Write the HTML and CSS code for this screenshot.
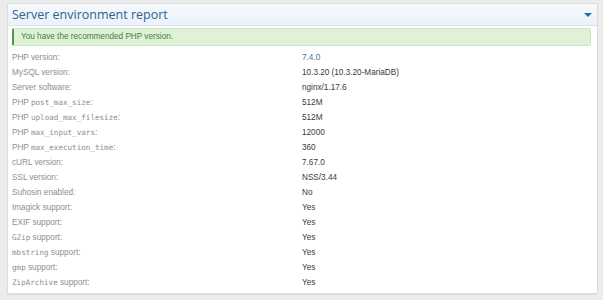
FILE: index.html
```html
<!DOCTYPE html>
<html lang="en">
<head>
    <meta charset="UTF-8">
    <title>Server environment report</title>
    <link rel="stylesheet" href="styles.css">
</head>
<body>
<div class="block">
    <div class="block-header">
        <h2>Server environment report</h2>
        <span class="toggle"></span>
    </div>
    <div class="block-body">
        <div class="notice">You have the recommended PHP version.</div>
        <dl class="report">
            <div class="row"><dt>PHP version:</dt><dd class="link">7.4.0</dd></div>
            <div class="row"><dt>MySQL version:</dt><dd>10.3.20 (10.3.20-MariaDB)</dd></div>
            <div class="row"><dt>Server software:</dt><dd>nginx/1.17.6</dd></div>
            <div class="row"><dt>PHP <code>post_max_size</code>:</dt><dd>512M</dd></div>
            <div class="row"><dt>PHP <code>upload_max_filesize</code>:</dt><dd>512M</dd></div>
            <div class="row"><dt>PHP <code>max_input_vars</code>:</dt><dd>12000</dd></div>
            <div class="row"><dt>PHP <code>max_execution_time</code>:</dt><dd>360</dd></div>
            <div class="row"><dt>cURL version:</dt><dd>7.67.0</dd></div>
            <div class="row"><dt>SSL version:</dt><dd>NSS/3.44</dd></div>
            <div class="row"><dt>Suhosin enabled:</dt><dd>No</dd></div>
            <div class="row"><dt>Imagick support:</dt><dd>Yes</dd></div>
            <div class="row"><dt>EXIF support:</dt><dd>Yes</dd></div>
            <div class="row"><dt><code>GZip</code> support:</dt><dd>Yes</dd></div>
            <div class="row"><dt><code>mbstring</code> support:</dt><dd>Yes</dd></div>
            <div class="row"><dt><code>gmp</code> support:</dt><dd>Yes</dd></div>
            <div class="row"><dt><code>ZipArchive</code> support:</dt><dd>Yes</dd></div>
        </dl>
    </div>
</div>
</body>
</html>
```
FILE: styles.css
```css
body{
    margin: 0;
    padding: 3px 5px 8px 7px;
    background: #ececec;
    font-family: "Open Sans", "Noto Sans", sans-serif;
}
.block{
    background: #fff;
    border: 1px solid #dcdcdc;
    border-radius: 2px;
    box-shadow: 0 1px 1px rgba(0,0,0,.06);
}
.block-header{
    display: flex;
    align-items: center;
    justify-content: space-between;
    height: 21px;
    padding: 0 5px 0 4px;
    background: linear-gradient(to bottom,#f6f9fd,#eaf2fb);
    border-bottom: 1px solid #dbe3ee;
}
.block-header h2{
    margin: 0;
    font-size: 12.5px;
    font-weight: normal;
    color: #2f5f8d;
}
.toggle{
    width: 0;
    height: 0;
    border-left: 4px solid transparent;
    border-right: 4px solid transparent;
    border-top: 4px solid #2a6aa8;
}
.block-body{
    padding: 2px 6px 3px 4px;
}
.notice{
    height: 16px;
    line-height: 16px;
    padding-left: 7px;
    background: #dff2d8;
    border: 1px solid #cde6c4;
    border-left: 2px solid #4c9a50;
    border-radius: 2px;
    color: #3f7f42;
    font-family: "Liberation Sans", Arial, sans-serif;
    font-size: 8.2px;
}
.report{
    margin: 4px 0 0;
}
.row{
    display: grid;
    grid-template-columns: 290px 1fr;
    height: 15px;
    line-height: 15px;
    font-family: "Liberation Sans", Arial, sans-serif;
    font-size: 8.2px;
}
.row dt{
    color: #8e8e8e;
}
.row dd{
    margin: 0;
    color: #3a3a3a;
}
.row dd.link{
    color: #47719c;
}
.row code{
    font-family: "DejaVu Sans Mono", monospace;
    font-size: 7.6px;
}
```
